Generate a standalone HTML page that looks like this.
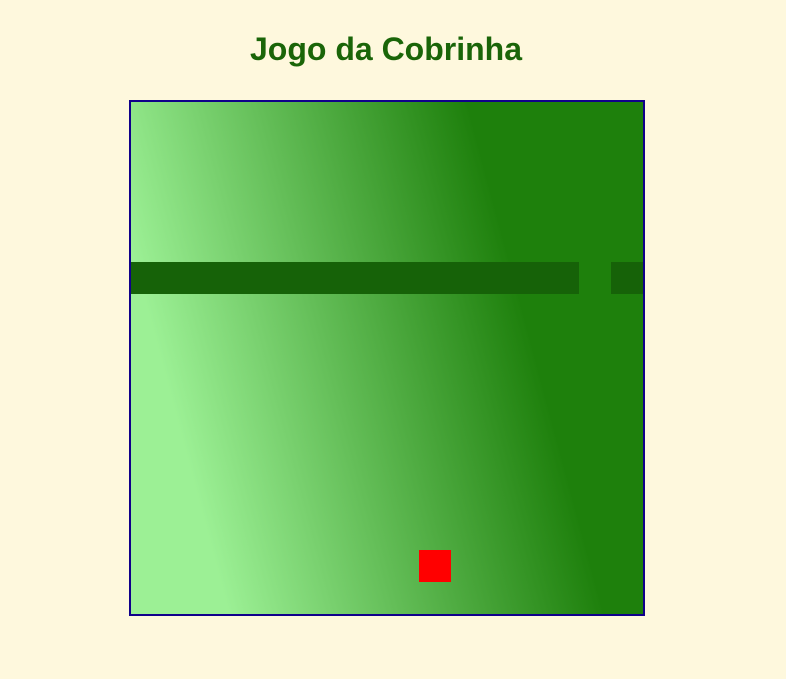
<!DOCTYPE html>
<html><head><meta charset="utf-8"><style>
html,body{margin:0;padding:0;background:#fef8dd;width:786px;height:679px;overflow:hidden}
h1{position:absolute;left:-7px;width:786px;top:29px;margin:0;text-align:center;font:bold 32px "Liberation Sans",Arial,sans-serif;color:#1a6508;line-height:40px}
#b{position:absolute;left:129px;top:100px;width:512px;height:512px;border:2px solid #10008a;
background:linear-gradient(75deg,#9cf095 0%,#9cf095 15%,#1e800c 73%,#1e800c 100%)}
.s{position:absolute;background:#166208;height:32px;top:160px}
</style></head><body>
<h1>Jogo da Cobrinha</h1>
<div id="b">
<div class="s" style="left:0;width:448px"></div>
<div class="s" style="left:480px;width:32px"></div>
<div style="position:absolute;left:288px;top:448px;width:32px;height:32px;background:#f00"></div>
</div>
</body></html>
